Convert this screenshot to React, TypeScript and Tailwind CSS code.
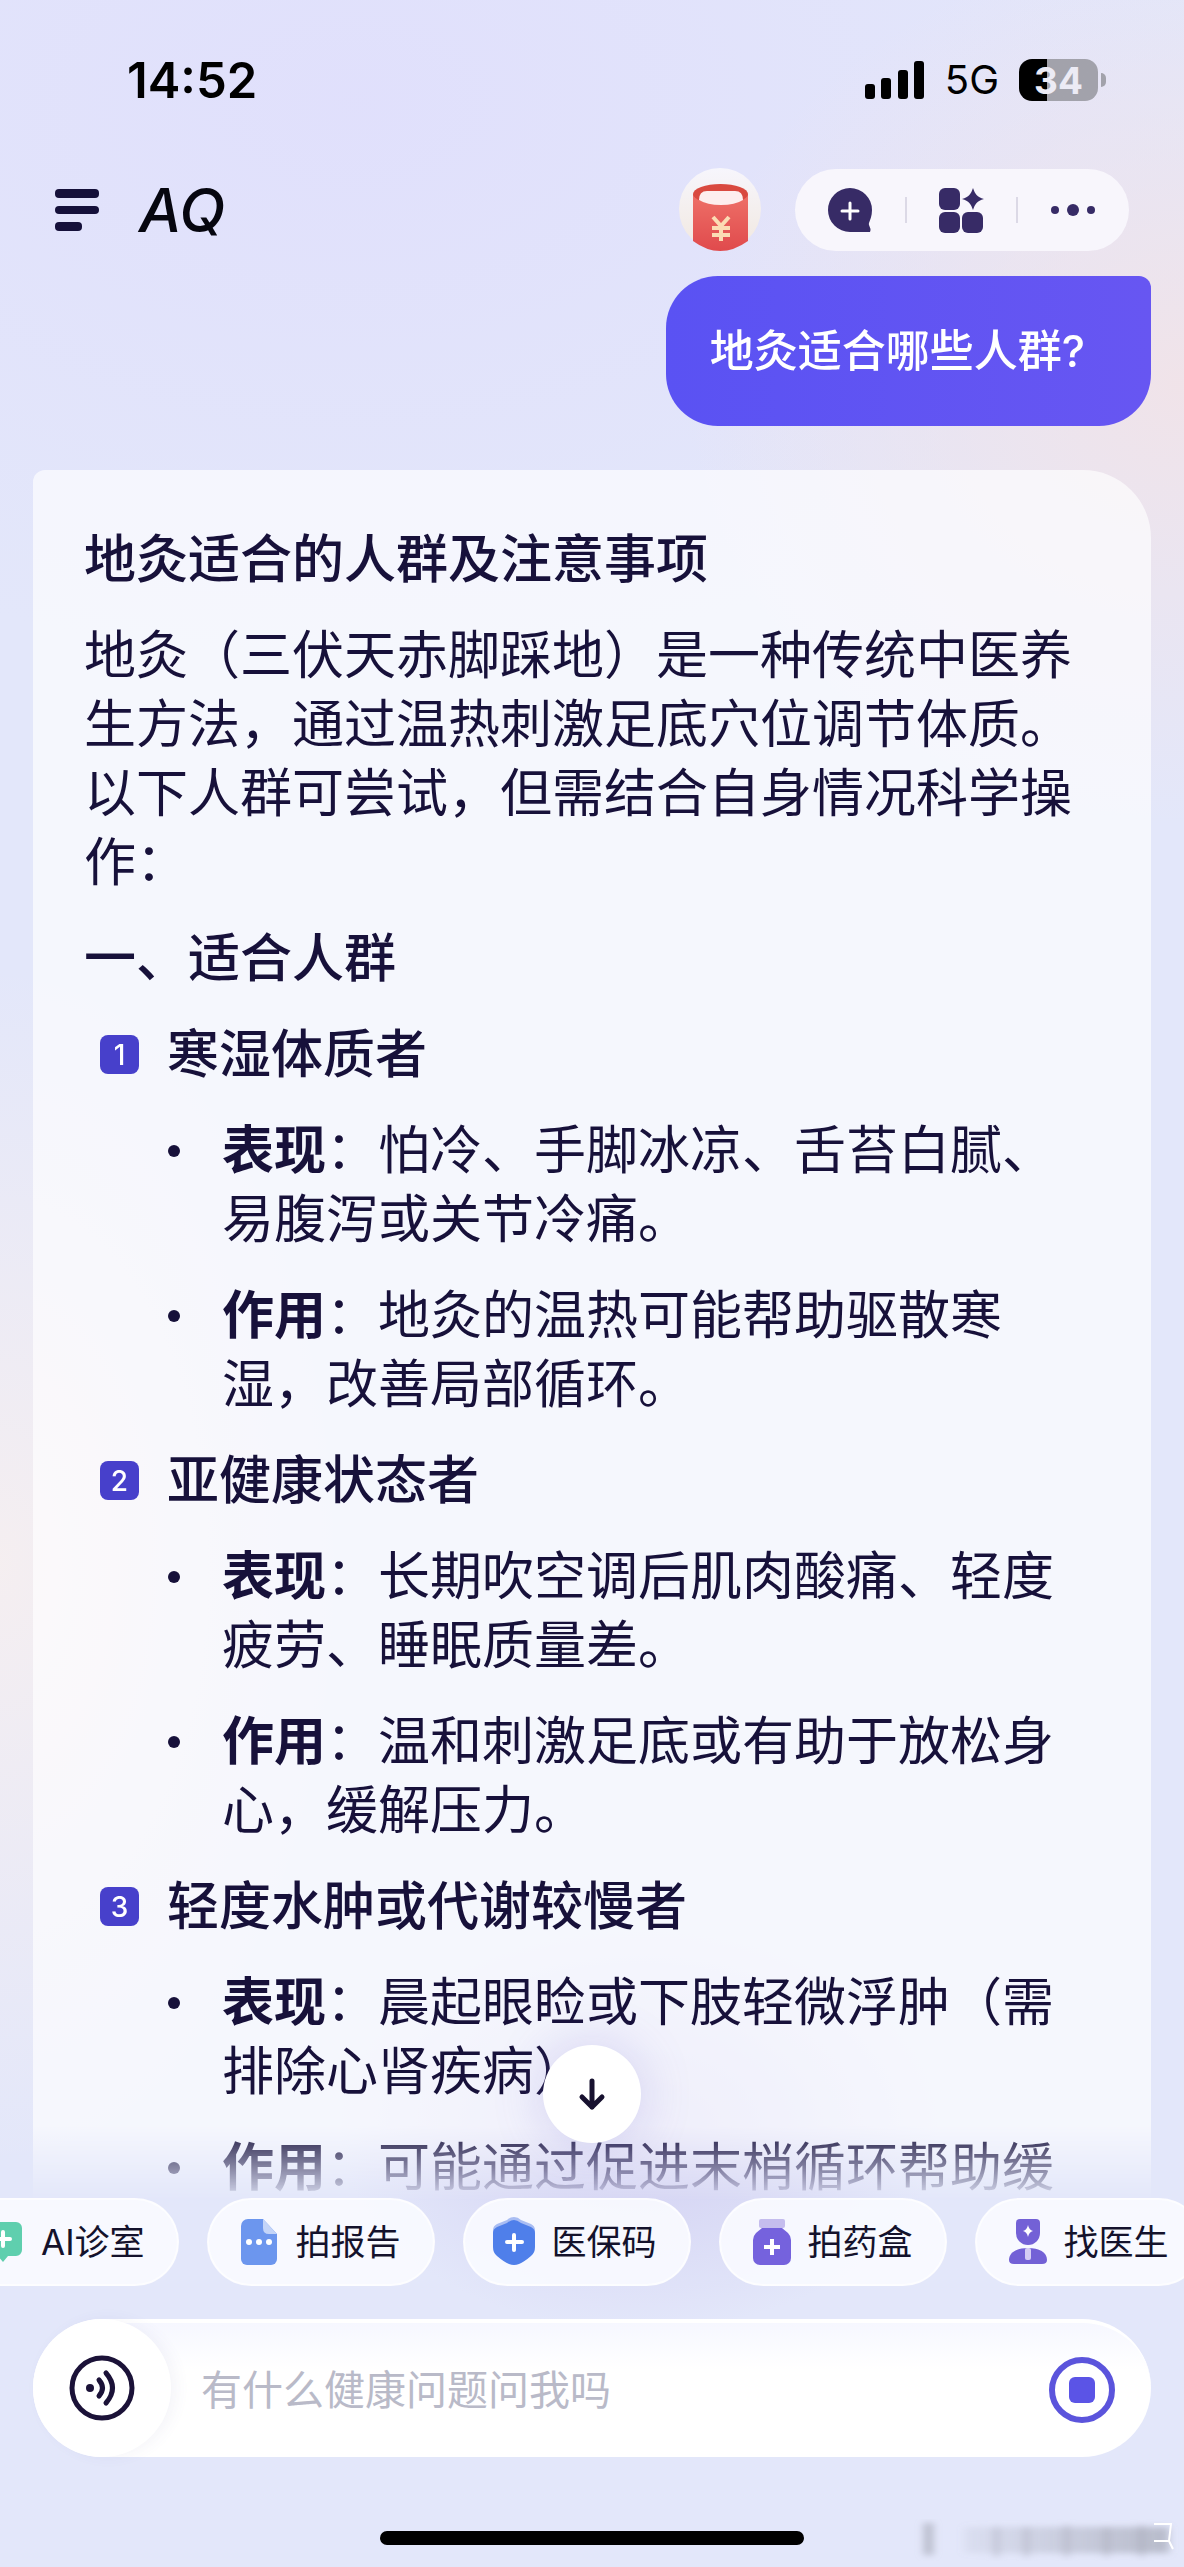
import { ReactNode } from "react";

type Point = { label: string; text: string };
type Group = { title: string; points: Point[] };

const intro =
  "地灸\uFF08三伏天赤脚踩地\uFF09是一种传统中医养生方法\uFF0C通过温热刺激足底穴位调节体质。以下人群可尝试\uFF0C但需结合自身情况科学操作\uFF1A";

const groups: Group[] = [
  {
    title: "寒湿体质者",
    points: [
      { label: "表现", text: "怕冷、手脚冰凉、舌苔白腻、易腹泻或关节冷痛。" },
      { label: "作用", text: "地灸的温热可能帮助驱散寒湿\uFF0C改善局部循环。" },
    ],
  },
  {
    title: "亚健康状态者",
    points: [
      { label: "表现", text: "长期吹空调后肌肉酸痛、轻度疲劳、睡眠质量差。" },
      { label: "作用", text: "温和刺激足底或有助于放松身心\uFF0C缓解压力。" },
    ],
  },
  {
    title: "轻度水肿或代谢较慢者",
    points: [
      { label: "表现", text: "晨起眼睑或下肢轻微浮肿\uFF08需排除心肾疾病\uFF09。" },
      { label: "作用", text: "可能通过促进末梢循环帮助缓" },
    ],
  },
];

function StatusBar() {
  return (
    <div className="flex h-40 items-center justify-between pl-[127px] pr-[78px] text-black">
      <span className="text-[49px] leading-none font-semibold">14:52</span>
      <div className="flex items-center">
        <svg className="h-[38px] w-[60px]" viewBox="0 0 60 38" aria-label="信号">
          <rect x="0" y="23" width="10" height="15" rx="3" />
          <rect x="16" y="17" width="10" height="21" rx="3" />
          <rect x="33" y="9" width="10" height="29" rx="3" />
          <rect x="49" y="0" width="10" height="38" rx="3" />
        </svg>
        <span className="ml-5 text-[40px] leading-none">5G</span>
        <div className="ml-5 flex items-center gap-[3px]">
          <div className="flex h-[42px] w-[79px] items-center justify-center rounded-[13px] bg-linear-to-r from-black from-35% to-[#a2a2ab] to-35%">
            <span className="text-[37px] leading-none font-bold text-[#ecebf5]">34</span>
          </div>
          <div className="h-[14px] w-[5px] rounded-r-full bg-[#a2a2ab]" />
        </div>
      </div>
    </div>
  );
}

function RedPacket() {
  return (
    <svg className="size-[84px]" viewBox="0 0 84 84">
      <defs>
        <linearGradient id="packet" x1="0" y1="0" x2="0" y2="1">
          <stop offset="0" stopColor="#ee7068" />
          <stop offset="1" stopColor="#e04a4c" />
        </linearGradient>
        <linearGradient id="halo" x1="0" y1="0" x2="0" y2="1">
          <stop offset="0" stopColor="#f7f6fc" />
          <stop offset="1" stopColor="#f1e8e0" />
        </linearGradient>
      </defs>
      <circle cx="42" cy="41" r="41" fill="url(#halo)" />
      <path d="M15 26v47q27 20 55 0V26z" fill="url(#packet)" />
      <ellipse cx="42.500" cy="26" rx="27.500" ry="10" fill="#d9493f" />
      <path d="M21 32q0-9 8-9h28q8 0 8 9-8 5-22 5t-22-5z" fill="#fdeeee" />
      <path
        d="M35 49l8 9 8-9M43 58v15M34 60h18M34 67h18"
        fill="none"
        stroke="#fbdcb4"
        strokeWidth="4"
      />
    </svg>
  );
}

function Header() {
  return (
    <header className="mt-2 flex items-center justify-between px-[55px]">
      <div className="flex items-center gap-10">
        <button aria-label="菜单">
          <svg className="h-[42px] w-[44px]" viewBox="0 0 44 42" fill="#15103a">
            <rect x="0" y="0" width="44" height="9" rx="4" />
            <rect x="0" y="17" width="44" height="8" rx="4" />
            <rect x="0" y="33" width="27" height="9" rx="4" />
          </svg>
        </button>
        <h1 className="text-[60px] leading-none font-medium text-[#06060f] italic">AQ</h1>
      </div>

      <div className="flex items-center gap-[33px]">
        <button aria-label="红包">
          <RedPacket />
        </button>
        <div className="flex h-[82px] items-center rounded-full bg-[#f8f6fc] px-[33px]">
          <button aria-label="新对话">
            <svg className="size-[45px]" viewBox="0 0 45 45">
              <path
                d="M22 0a22 22 0 0 1 22 22c0 6-2 10-3 13-1 3 3 5 1 9H22A22 22 0 0 1 22 0z"
                fill="#372b66"
              />
              <path d="M22 15v16M14 23h16" stroke="#fff" strokeWidth="3" strokeLinecap="round" />
            </svg>
          </button>
          <span className="mx-8 h-[26px] w-[2px] bg-[#dcd9e6]" />
          <button aria-label="应用">
            <svg className="size-[45px]" viewBox="0 0 45 45" fill="#372b66">
              <rect x="0" y="0" width="21" height="22" rx="6" />
              <rect x="0" y="24" width="21" height="21" rx="6" />
              <rect x="23" y="24" width="21" height="21" rx="6" />
              <path d="M34 0c2 6 4 9 11 11-7 2-9 5-11 11-2-6-4-9-11-11 7-2 9-5 11-11z" />
            </svg>
          </button>
          <span className="mx-8 h-[26px] w-[2px] bg-[#dcd9e6]" />
          <button aria-label="更多">
            <svg className="h-[14px] w-[46px]" viewBox="0 0 46 14" fill="#372b66">
              <circle cx="5" cy="7" r="4" />
              <circle cx="23" cy="7" r="6" />
              <circle cx="41" cy="7" r="4" />
            </svg>
          </button>
        </div>
      </div>
    </header>
  );
}

function Answer() {
  return (
    <article className="mt-11 flex flex-col gap-[27px] rounded-tl-xl rounded-tr-[68px] bg-white/65 pt-[55px] pr-[67px] pl-[51px] text-[52px] leading-[69px] text-[#17113a]">
      <h2 className="font-medium">地灸适合的人群及注意事项</h2>
      <p>{intro}</p>
      <h3 className="font-medium">一、适合人群</h3>
      {groups.map((group, index) => (
        <section key={group.title} className="flex flex-col gap-[27px]">
          <h4 className="flex items-center gap-7 pl-4 font-medium">
            <span className="flex size-[39px] items-center justify-center rounded-lg bg-[#4740cb] text-[28px] leading-none font-medium text-white">
              {index + 1}
            </span>
            {group.title}
          </h4>
          <ul className="flex flex-col gap-[27px] pl-[84px]">
            {group.points.map((point) => (
              <li key={point.label} className="flex gap-[42px]">
                <span className="mt-[29px] size-3 shrink-0 rounded-full bg-[#17113a]" />
                <p>
                  <strong className="font-bold">{point.label}</strong>
                  {"\uFF1A" + point.text}
                </p>
              </li>
            ))}
          </ul>
        </section>
      ))}
    </article>
  );
}

function Chip({ label, children }: { label: string; children: ReactNode }) {
  return (
    <button className="flex h-[88px] shrink-0 items-center gap-[17px] rounded-full border-2 border-white/70 bg-[#fafbff]/90 px-8 text-[35px] leading-none text-[#14122c]">
      <svg className="h-[54px] w-[38px] overflow-visible" viewBox="0 0 38 54">
        {children}
      </svg>
      {label}
    </button>
  );
}

function Chips() {
  return (
    <nav className="flex overflow-hidden" aria-label="快捷入口">
      <div className="-ml-[48px] flex gap-7">
        <Chip label="AI诊室">
          <path d="M5 7h25a6 6 0 0 1 6 6v22a6 6 0 0 1-6 6H22l-5 6-5-6H5a5 5 0 0 1-5-6V13a6 6 0 0 1 5-6z" fill="#5fcfae" />
          <path d="M17 17v14M10 24h14" stroke="#fff" strokeWidth="4" strokeLinecap="round" />
        </Chip>
        <Chip label="拍报告">
          <path d="M7 4h15l14 15v25a6 6 0 0 1-6 6H6a6 6 0 0 1-6-6V11a7 7 0 0 1 7-7z" fill="#6c96ee" />
          <path d="M22 4l14 15H28q-6 0-6-6z" fill="#c3d4f8" />
          <g fill="#fff">
            <circle cx="8" cy="27" r="3" />
            <circle cx="18" cy="27" r="3" />
            <circle cx="28" cy="27" r="3" />
          </g>
        </Chip>
        <Chip label="医保码">
          <path d="M17 2q4 0 7 3l10 4q4 2 4 6v16H-4V15q0-4 4-6l10-4q3-3 7-3z" fill="#a9bdf3" />
          <path d="M17 5q3 0 7 3l10 4q4 2 4 6v14q0 6-4 9-7 6-12 8-5 2-10 0-5-2-12-8-4-3-4-9V18q0-4 4-6l10-4q4-3 7-3z" fill="#4f7fea" />
          <path d="M17 20v15M10 27h15" stroke="#fff" strokeWidth="4" strokeLinecap="round" />
        </Chip>
        <Chip label="拍药盒">
          <rect x="6" y="4" width="26" height="9" rx="2" fill="#c5bdee" />
          <path d="M9 13h20l6 5q3 3 3 7v18a7 7 0 0 1-7 7H7a7 7 0 0 1-7-7V25q0-4 3-7z" fill="#7562dd" />
          <path d="M19 24v16M11 32h16" stroke="#fff" strokeWidth="4" />
        </Chip>
        <Chip label="找医生">
          <path d="M11 4h16a4 4 0 0 1 4 4v10a12 12 0 0 1-24 0V8a4 4 0 0 1 4-4z" fill="#7361d6" />
          <path d="M19 10q1 5 5 6-4 1-5 6-1-5-5-6 4-1 5-6z" fill="#fff" />
          <path d="M0 45c0-8 8-12 19-12s19 4 19 12q0 4-5 4H5q-5 0-5-4z" fill="#7361d6" />
          <rect x="16" y="33" width="6" height="12" rx="2" fill="#d5cdf4" />
        </Chip>
      </div>
    </nav>
  );
}

function Composer() {
  return (
    <form className="mx-[33px] mt-[33px] flex h-[138px] items-center rounded-full border-t-4 border-white bg-linear-to-b from-[#f6f7ff] to-white to-35% pr-9">
      <button
        type="button"
        aria-label="语音输入"
        className="-mt-1 flex size-[138px] shrink-0 items-center justify-center rounded-full bg-white shadow-[6px_0_14px_rgba(90,80,160,0.06)]"
      >
        <svg className="size-[66px]" viewBox="0 0 66 66" fill="none" stroke="#1b1238" strokeLinecap="round">
          <circle cx="33" cy="33" r="30" strokeWidth="5" />
          <circle cx="21" cy="33" r="4" fill="#1b1238" stroke="none" />
          <path d="M30 25q7 8 0 16M37 18q13 15 0 30" strokeWidth="5" />
        </svg>
      </button>
      <input
        type="text"
        aria-label="输入问题"
        placeholder="有什么健康问题问我吗"
        className="ml-[30px] h-16 min-w-0 flex-1 text-[41px] placeholder-[#b9bac8] outline-none"
      />
      <button type="button" aria-label="停止">
        <svg className="size-[66px]" viewBox="0 0 66 66">
          <circle cx="33" cy="33" r="30" fill="none" stroke="#5b54dc" strokeWidth="6" />
          <rect x="20" y="20" width="26" height="26" rx="6" fill="#5b54e6" />
        </svg>
      </button>
    </form>
  );
}

function Watermark() {
  return (
    <svg className="absolute right-0 bottom-0 h-[54px] w-[270px]" viewBox="0 0 270 54">
      <defs>
        <filter id="smear">
          <feGaussianBlur stdDeviation="4 3" />
        </filter>
        <linearGradient id="smearFade">
          <stop offset="0" stopColor="#8d909c" stopOpacity="0.1" />
          <stop offset="1" stopColor="#8d909c" stopOpacity="0.5" />
        </linearGradient>
      </defs>
      <g filter="url(#smear)">
        <rect x="10" y="10" width="9" height="32" fill="#9a9ca8" opacity="0.6" />
        <rect x="50" y="14" width="205" height="26" fill="url(#smearFade)" />
        <rect x="80" y="14" width="5" height="30" fill="#9a9ca8" opacity="0.4" />
        <rect x="110" y="14" width="5" height="30" fill="#9a9ca8" opacity="0.4" />
        <rect x="150" y="12" width="5" height="32" fill="#9a9ca8" opacity="0.4" />
        <rect x="190" y="14" width="5" height="30" fill="#9a9ca8" opacity="0.4" />
        <rect x="225" y="12" width="5" height="32" fill="#9a9ca8" opacity="0.4" />
      </g>
      <path d="M240 11h17l-2 17 4 8M240 28h15" fill="none" stroke="#fff" strokeWidth="2" />
    </svg>
  );
}

export default function App() {
  return (
    <div className="relative flex min-h-screen flex-col overflow-hidden bg-[#e3e7fa] bg-[radial-gradient(300px_200px_at_54%_83%,rgba(206,203,240,0.85),transparent),radial-gradient(500px_440px_at_100%_15%,rgba(241,227,232,0.95),transparent),radial-gradient(340px_600px_at_0%_61%,rgba(246,239,240,0.95),transparent),radial-gradient(900px_560px_at_30%_4%,rgba(224,223,252,0.9),transparent)] font-['Inter','Noto_Sans_CJK_SC',sans-serif]">
      <StatusBar />
      <Header />

      <main className="mt-6 mask-[linear-gradient(to_top,transparent,black_76px)] px-[33px]">
        <div className="flex justify-end">
          <p className="rounded-[52px] rounded-tr-[12px] bg-linear-to-r from-[#5a52f3] to-[#6756f2] py-11 pr-[66px] pl-11 text-[44px] leading-[62px] font-medium text-white">
            地灸适合哪些人群?
          </p>
        </div>
        <Answer />
      </main>

      <footer className="relative -mt-1">
        <button
          aria-label="回到底部"
          className="absolute bottom-full left-1/2 mb-[55px] flex size-[98px] -translate-x-1/2 items-center justify-center rounded-full bg-white shadow-[0_0_50px_rgba(120,110,210,0.25)]"
        >
          <svg className="size-[34px]" viewBox="0 0 34 34" fill="none" stroke="#17112f" strokeWidth="5" strokeLinecap="round" strokeLinejoin="round">
            <path d="M17 4v26M7 20l10 10 10-10" />
          </svg>
        </button>
        <Chips />
        <Composer />
        <div className="mx-auto mt-[74px] mb-[22px] h-[14px] w-[424px] rounded-full bg-black" />
        <Watermark />
      </footer>
    </div>
  );
}
